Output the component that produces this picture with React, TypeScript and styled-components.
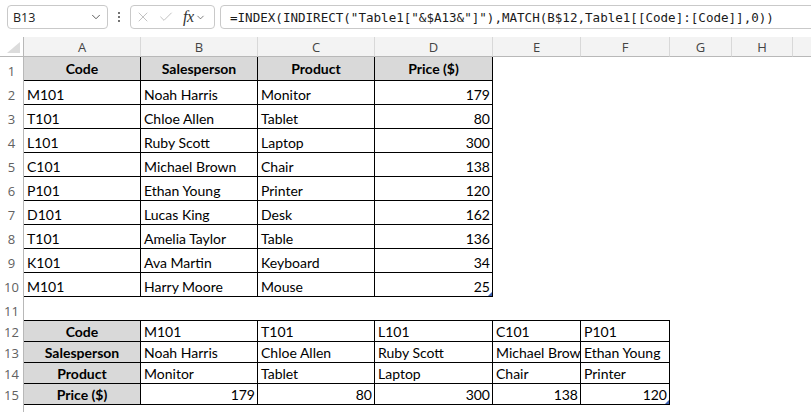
import React from "react";
import styled, { createGlobalStyle } from "styled-components";
import { ChevronDown, X, Check } from "lucide-react";

const GlobalStyle = createGlobalStyle`
  html, body {
    margin: 0;
    padding: 0;
    background: #fff;
  }
  body {
    font-family: Lato, "Liberation Sans", sans-serif;
    overflow: hidden;
  }
`;

const Page = styled.div`
  width: 811px;
  height: 412px;
  overflow: hidden;
  background: #fff;
`;

const TopBar = styled.div`
  height: 37px;
  box-sizing: border-box;
  padding: 5px 0 0 7px;
  display: flex;
  align-items: flex-start;
  background: #fff;
`;

const Box = styled.div<{ $w?: number }>`
  box-sizing: border-box;
  height: 24px;
  ${(p) => (p.$w ? `width: ${p.$w}px; flex: none;` : "flex: 1; margin-right: -20px;")}
  border: 1px solid #c9c9c9;
  border-radius: 4px;
  background: #fff;
  display: flex;
  align-items: center;
`;

const NameText = styled.span`
  flex: 1;
  padding-left: 5px;
  font-family: "Open Sans", "Noto Sans", sans-serif;
  font-size: 12.5px;
  color: #222;
`;

const Dots = styled.div`
  width: 22px;
  flex: none;
  height: 24px;
  display: flex;
  flex-direction: column;
  align-items: center;
  justify-content: center;
  gap: 2px;
`;

const Dot = styled.span`
  width: 2px;
  height: 2px;
  border-radius: 1px;
  background: #444;
`;

const IconSlot = styled.span<{ $w: number; $dark?: boolean }>`
  width: ${(p) => p.$w}px;
  display: flex;
  align-items: center;
  justify-content: center;
  color: ${(p) => (p.$dark ? "#3a3a3a" : "#ababab")};
`;

const Fx = styled.span`
  font-family: "Liberation Serif", serif;
  font-style: italic;
  font-size: 16px;
  color: #333;
  letter-spacing: -0.5px;
  margin-left: 6px;
`;

const Gap = styled.div<{ $w: number }>`
  width: ${(p) => p.$w}px;
  flex: none;
`;

const Formula = styled.span`
  padding-left: 9px;
  font-family: "DejaVu Sans Mono", "Liberation Mono", monospace;
  font-size: 12.55px;
  color: #1a1a1a;
  white-space: nowrap;
`;

const Sheet = styled.div`
  display: grid;
  grid-template-columns: 24px 117px 117px 117px 118px 88px 89px 62px 61px 64px;
  grid-template-rows: 20px repeat(11, 24px) repeat(5, 21px);
`;

const Corner = styled.div`
  position: relative;
  box-sizing: border-box;
  border-right: 1px solid #b8b8b8;
  border-bottom: 1px solid #b8b8b8;
  background: #fff;
  &::after {
    content: "";
    position: absolute;
    right: 3px;
    bottom: 3px;
    width: 13px;
    height: 11px;
    background: #dcdcdc;
    clip-path: polygon(100% 0, 100% 100%, 0 100%);
  }
`;

const ColHead = styled.div`
  box-sizing: border-box;
  display: flex;
  align-items: center;
  justify-content: center;
  background: #f3f3f3;
  border-right: 1px solid #d8d8d8;
  border-bottom: 1px solid #b8b8b8;
  font-family: "Open Sans", "Noto Sans", sans-serif;
  font-size: 13px;
  line-height: 18px;
  color: #444;
`;

const RowHead = styled.div`
  box-sizing: border-box;
  display: flex;
  align-items: flex-end;
  justify-content: center;
  padding-bottom: 1px;
  border-right: 1px solid #b8b8b8;
  font-family: "Open Sans", "Noto Sans", sans-serif;
  font-size: 13px;
  line-height: 18px;
  color: #616161;
`;

type Kind = "blank" | "head" | "body" | "label";

const Cell = styled.div<{ $kind: Kind; $num?: boolean; $edge?: boolean }>`
  box-sizing: border-box;
  position: relative;
  min-width: 0;
  overflow: hidden;
  white-space: nowrap;
  display: flex;
  align-items: ${(p) => (p.$kind === "head" ? "center" : "flex-end")};
  justify-content: ${(p) =>
    p.$kind === "head" || p.$kind === "label" ? "center" : p.$num ? "flex-end" : "flex-start"};
  padding: ${(p) => (p.$num ? "0 2px 0 0" : p.$kind === "body" ? "0 0 0 3px" : "0")};
  font-size: 14px;
  line-height: 18px;
  color: #000;
  font-weight: ${(p) => (p.$kind === "head" || p.$kind === "label" ? 700 : 400)};
  background: ${(p) => (p.$kind === "head" || p.$kind === "label" ? "#d9d9d9" : "#fff")};
  border-right: ${(p) => (p.$kind === "blank" ? "none" : "1px solid #000")};
  border-bottom: ${(p) => (p.$kind === "blank" && !p.$edge ? "none" : "1px solid #000")};
`;

const Handle = styled.span`
  position: absolute;
  right: 0;
  bottom: 0;
  width: 4px;
  height: 4px;
  background: #3b5fb0;
  clip-path: polygon(100% 0, 100% 100%, 0 100%);
`;

// column I is only partly on screen, so its letter is not visible
const COLS = ["A", "B", "C", "D", "E", "F", "G", "H", ""];

const rows: [string, string, string, number][] = [
  ["M101", "Noah Harris", "Monitor", 179],
  ["T101", "Chloe Allen", "Tablet", 80],
  ["L101", "Ruby Scott", "Laptop", 300],
  ["C101", "Michael Brown", "Chair", 138],
  ["P101", "Ethan Young", "Printer", 120],
  ["D101", "Lucas King", "Desk", 162],
  ["T101", "Amelia Taylor", "Table", 136],
  ["K101", "Ava Martin", "Keyboard", 34],
  ["M101", "Harry Moore", "Mouse", 25],
];

const fields = ["Code", "Salesperson", "Product", "Price ($)"];
const lookup = rows.slice(0, 5);

// empty cells to the right of a table; edge=true draws the top rule of the lookup table
const blanks = (row: number, from: number, edge = false) =>
  COLS.slice(from).map((c, i) => <Cell key={`${row}-${from + i}`} $kind="blank" $edge={edge && from + i < 6} />);

export default function App() {
  return (
    <Page>
      <GlobalStyle />
      <TopBar>
        <Box $w={101}>
          <NameText>B13</NameText>
          <IconSlot $w={22} $dark>
            <ChevronDown size={14} strokeWidth={1.4} />
          </IconSlot>
        </Box>
        <Dots>
          <Dot />
          <Dot />
          <Dot />
        </Dots>
        <Box $w={85}>
          <IconSlot $w={24}>
            <X size={16} strokeWidth={1.1} />
          </IconSlot>
          <IconSlot $w={22}>
            <Check size={16} strokeWidth={1.1} />
          </IconSlot>
          <Fx>fx</Fx>
          <IconSlot $w={14} $dark>
            <ChevronDown size={11} strokeWidth={1.4} />
          </IconSlot>
        </Box>
        <Gap $w={5} />
        <Box>
          <Formula>=INDEX(INDIRECT("Table1["&amp;$A13&amp;"]"),MATCH(B$12,Table1[[Code]:[Code]],0))</Formula>
        </Box>
      </TopBar>

      <Sheet>
        <Corner />
        {COLS.map((c, i) => (
          <ColHead key={i}>{c}</ColHead>
        ))}

        <RowHead>1</RowHead>
        {fields.map((f) => (
          <Cell key={f} $kind="head">
            {f}
          </Cell>
        ))}
        {blanks(1, 4)}

        {rows.map((r, i) => (
          <React.Fragment key={i}>
            <RowHead>{i + 2}</RowHead>
            <Cell $kind="body">{r[0]}</Cell>
            <Cell $kind="body">{r[1]}</Cell>
            <Cell $kind="body">{r[2]}</Cell>
            <Cell $kind="body" $num>
              {r[3]}
              {i === rows.length - 1 && <Handle />}
            </Cell>
            {blanks(i + 2, 4)}
          </React.Fragment>
        ))}

        <RowHead>11</RowHead>
        {blanks(11, 0, true)}

        {fields.map((f, fi) => (
          <React.Fragment key={f}>
            <RowHead>{12 + fi}</RowHead>
            <Cell $kind="label">{f}</Cell>
            {lookup.map((r, ci) => (
              <Cell key={ci} $kind="body" $num={fi === 3}>
                {r[fi]}
                {fi === 3 && ci === lookup.length - 1 && <Handle />}
              </Cell>
            ))}
            {blanks(12 + fi, 6)}
          </React.Fragment>
        ))}

        <RowHead />
        {blanks(16, 0)}
      </Sheet>
    </Page>
  );
}
